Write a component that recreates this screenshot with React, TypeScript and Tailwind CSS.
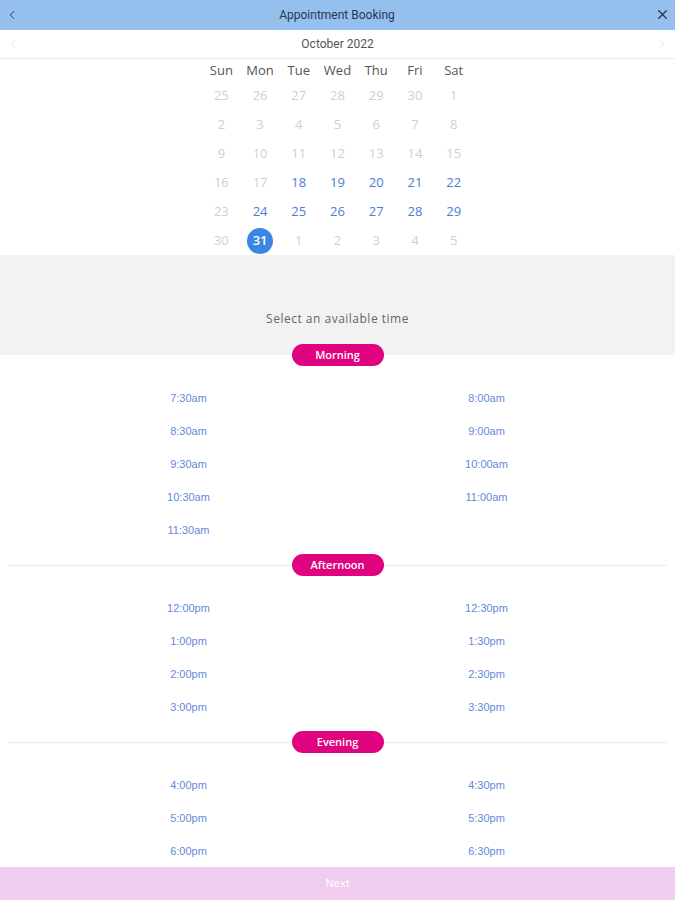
import { ChevronLeft, ChevronRight, X } from 'lucide-react';

type Day = { n: number; state: 'off' | 'on' | 'sel' };

const weekdays = ['Sun', 'Mon', 'Tue', 'Wed', 'Thu', 'Fri', 'Sat'];

const off = (n: number): Day => ({ n, state: 'off' });
const on = (n: number): Day => ({ n, state: 'on' });

const weeks: Day[][] = [
  [25, 26, 27, 28, 29, 30, 1].map(off),
  [2, 3, 4, 5, 6, 7, 8].map(off),
  [9, 10, 11, 12, 13, 14, 15].map(off),
  [off(16), off(17), on(18), on(19), on(20), on(21), on(22)],
  [off(23), on(24), on(25), on(26), on(27), on(28), on(29)],
  [off(30), { n: 31, state: 'sel' }, off(1), off(2), off(3), off(4), off(5)],
];

const sections = [
  { name: 'Morning', times: ['7:30am', '8:00am', '8:30am', '9:00am', '9:30am', '10:00am', '10:30am', '11:00am', '11:30am'] },
  { name: 'Afternoon', times: ['12:00pm', '12:30pm', '1:00pm', '1:30pm', '2:00pm', '2:30pm', '3:00pm', '3:30pm'] },
  { name: 'Evening', times: ['4:00pm', '4:30pm', '5:00pm', '5:30pm', '6:00pm', '6:30pm'] },
];

function Pill({ label, line }: { label: string; line: boolean }) {
  return (
    <div className="relative z-10 flex h-[22px] items-center justify-center">
      {line && <div className="absolute inset-x-2 top-[11px] h-px bg-[#ececec]" />}
      <span className="relative flex h-[22px] w-[92px] items-center justify-center rounded-full bg-[#e0037f] font-['Open_Sans',sans-serif] text-[11px] font-semibold text-white">
        {label}
      </span>
    </div>
  );
}

export default function App() {
  return (
    <div className="flex h-[900px] w-[675px] flex-col overflow-hidden bg-white">
      <div className="flex h-[30px] items-center justify-between bg-[#95c0ee] px-[5px] text-[#2a3650]">
        <ChevronLeft size={14} strokeWidth={1.6} />
        <span className="font-['Roboto',sans-serif] text-[12px]">Appointment Booking</span>
        <X size={15} strokeWidth={2.2} />
      </div>

      <div className="flex h-[30px] items-center justify-between border-b border-[#ececec] px-[6px] pt-px text-[#dcdcdc]">
        <ChevronLeft size={14} strokeWidth={1.2} />
        <span className="font-['Roboto',sans-serif] text-[12px] text-[#555]">October 2022</span>
        <ChevronRight size={14} strokeWidth={1.2} />
      </div>

      <div className="mx-auto w-[271px] font-['Open_Sans',sans-serif]">
        <div className="grid h-[22px] grid-cols-7 items-center pt-[2px] text-center text-[13px] text-[#555]">
          {weekdays.map((w) => (
            <span key={w}>{w}</span>
          ))}
        </div>
        {weeks.map((week, i) => (
          <div key={i} className="grid h-[29px] grid-cols-7 items-center text-center text-[13px]">
            {week.map((d, j) => (
              <div key={j} className="flex justify-center">
                {d.state === 'sel' ? (
                  <span className="flex h-[26px] w-[26px] items-center justify-center rounded-full bg-[#3a86e3] font-semibold text-white">
                    {d.n}
                  </span>
                ) : (
                  <span className={d.state === 'on' ? 'text-[#4a7dd6]' : 'text-[#cfcfcf]'}>{d.n}</span>
                )}
              </div>
            ))}
          </div>
        ))}
      </div>

      <div className="flex h-[101px] items-start justify-center bg-[#f2f2f2] pt-[55px] font-['Open_Sans',sans-serif] text-[12px] tracking-[0.5px] text-[#666]">
        Select an available time
      </div>

      {sections.map((s, i) => (
        <div key={s.name} className={i === 0 ? '-mt-[11px]' : 'mt-[8px]'}>
          <Pill label={s.name} line={i > 0} />
          <div className="mx-auto grid w-[596px] grid-cols-2 pt-[15px] text-center font-['Liberation_Sans',sans-serif] text-[11px] text-[#6589dc]">
            {s.times.map((t) => (
              <div key={t} className="flex h-[33px] items-center justify-center">
                {t}
              </div>
            ))}
          </div>
        </div>
      ))}

      <div className="mt-auto flex h-[33px] items-center justify-center bg-[#f0cdee] font-['Open_Sans',sans-serif] text-[11px] text-white">
        Next
      </div>
    </div>
  );
}
